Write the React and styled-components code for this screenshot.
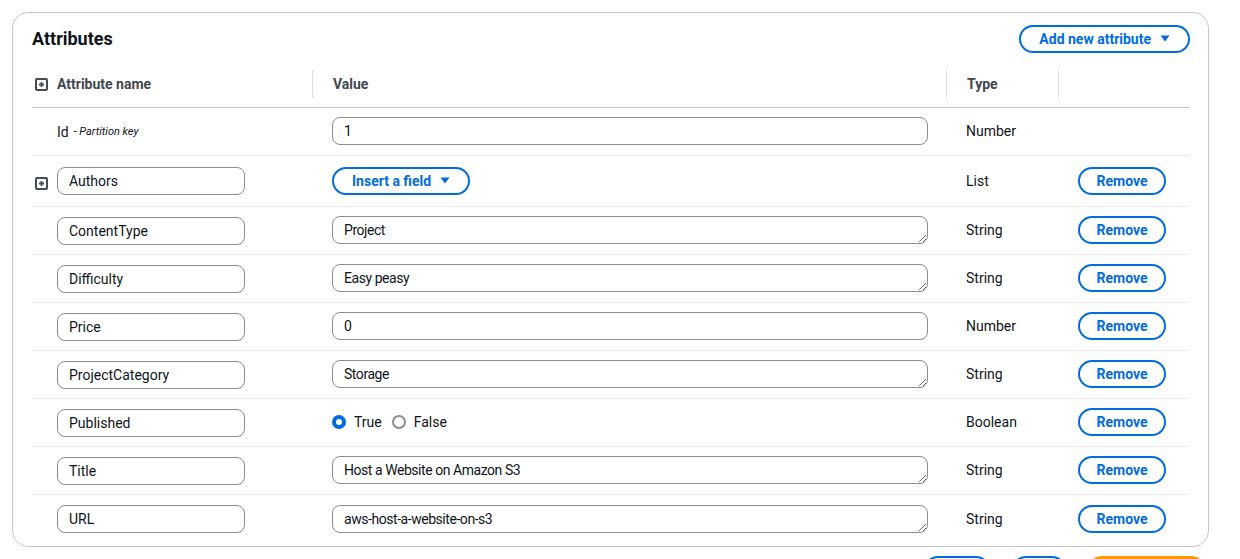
import React from "react";
import styled, { createGlobalStyle } from "styled-components";

const GlobalStyle = createGlobalStyle`
  body {
    margin: 0;
    background: #ffffff;
    font-family: Roboto, "Open Sans", Arial, sans-serif;
    font-size: 14px;
    line-height: 20px;
    color: #0f141a;
  }
  * { box-sizing: border-box; }
`;

const rows = [
  { name: "Authors", kind: "insert", type: "List", expandable: true },
  { name: "ContentType", kind: "text", value: "Project", type: "String" },
  { name: "Difficulty", kind: "text", value: "Easy peasy", type: "String" },
  { name: "Price", kind: "input", value: "0", type: "Number" },
  { name: "ProjectCategory", kind: "text", value: "Storage", type: "String" },
  { name: "Published", kind: "bool", value: true, type: "Boolean" },
  { name: "Title", kind: "text", value: "Host a Website on Amazon S3", type: "String" },
  { name: "URL", kind: "text", value: "aws-host-a-website-on-s3", type: "String" },
];

const Caret = () => (
  <svg width="10" height="7" viewBox="0 0 10 7">
    <path d="M0.5 0.5 H9.5 L5 6.5 Z" fill="currentColor" />
  </svg>
);

const ExpandIcon = () => (
  <svg width="13" height="13" viewBox="0 0 13 13">
    <rect x="1" y="1" width="11" height="11" rx="1" fill="none" stroke="#414d5c" strokeWidth="2" />
    <path d="M6.5 4 V9 M4 6.5 H9" stroke="#414d5c" strokeWidth="1.8" />
  </svg>
);

const App = () => {
  return (
    <>
      <GlobalStyle />
      <Page>
        <Card>
          <CardHeader>
            <Title>Attributes</Title>
            <PillButton>
              Add new attribute <Caret />
            </PillButton>
          </CardHeader>

          <HeadRow>
            <NameCell>
              <IconSlot><ExpandIcon /></IconSlot>
              <HeadText>Attribute name</HeadText>
            </NameCell>
            <HeadCell $sep>
              <HeadText>Value</HeadText>
            </HeadCell>
            <HeadCell $sep>
              <HeadText>Type</HeadText>
            </HeadCell>
            <HeadCell $sep />
          </HeadRow>

          <Row>
            <NameCell>
              <IconSlot />
              <span>Id</span>
              <KeyNote>- Partition key</KeyNote>
            </NameCell>
            <Cell>
              <ValueInput defaultValue="1" readOnly />
            </Cell>
            <Cell>Number</Cell>
            <Cell />
          </Row>

          {rows.map((r, i) => (
            <Row key={r.name} $tall={r.kind === "insert"} $last={i === rows.length - 1}>
              <NameCell>
                <IconSlot $low>{r.expandable && <ExpandIcon />}</IconSlot>
                <NameInput defaultValue={r.name} readOnly />
              </NameCell>
              <Cell>
                {r.kind === "insert" && (
                  <PillButton>
                    Insert a field <Caret />
                  </PillButton>
                )}
                {r.kind === "input" && <ValueInput defaultValue={r.value} readOnly />}
                {r.kind === "text" && <ValueArea defaultValue={r.value} readOnly rows={1} />}
                {r.kind === "bool" && (
                  <Radios>
                    <RadioLabel>
                      <Radio $checked /> True
                    </RadioLabel>
                    <RadioLabel>
                      <Radio /> False
                    </RadioLabel>
                  </Radios>
                )}
              </Cell>
              <Cell>{r.type}</Cell>
              <Cell>
                <PillButton $w={88}>Remove</PillButton>
              </Cell>
            </Row>
          ))}
        </Card>

        <Footer>
          <PillButton $w={66}>Cancel</PillButton>
          <PillButton $w={54}>Save</PillButton>
          <PrimaryButton $w={117}>Save and close</PrimaryButton>
        </Footer>
      </Page>
    </>
  );
};

const Page = styled.div`
  padding: 12px 31px 0 12px;
`;

const Card = styled.div`
  width: 1197px;
  border: 1px solid #c6c6cd;
  border-radius: 16px;
  padding: 12px 18px 3px 19px;
`;

const CardHeader = styled.div`
  display: flex;
  align-items: center;
  justify-content: space-between;
  height: 27px;
`;

const Title = styled.h2`
  margin: 0;
  font-size: 18px;
  line-height: 22px;
  font-weight: 700;
  color: #0f141a;
`;

const PillButton = styled.button`
  display: inline-flex;
  align-items: center;
  justify-content: center;
  gap: 9px;
  height: 28px;
  width: ${(p) => (p.$w ? `${p.$w}px` : "auto")};
  padding: 0 ${(p) => (p.$w ? "0" : "18px")};
  border: 2px solid #006ce0;
  border-radius: 20px;
  background: #ffffff;
  color: #006ce0;
  font-family: inherit;
  font-size: 14px;
  font-weight: 700;
  line-height: 20px;
  white-space: nowrap;
  overflow: hidden;
  cursor: pointer;
`;

const PrimaryButton = styled(PillButton)`
  background: #ff9900;
  border-color: #ff9900;
  color: #0f141a;
`;

const grid = `
  display: grid;
  grid-template-columns: 280px 634px 112px 132px;
`;

const HeadRow = styled.div`
  ${grid}
  margin-top: 9px;
  height: 47px;
  border-bottom: 1px solid #c6c6cd;
  align-items: center;
`;

const HeadCell = styled.div`
  height: 28px;
  display: flex;
  align-items: center;
  padding-left: 20px;
  border-left: ${(p) => (p.$sep ? "1px solid #dedee3" : "none")};
`;

const HeadText = styled.span`
  font-weight: 700;
  color: #424650;
`;

const Row = styled.div`
  ${grid}
  height: ${(p) => (p.$tall ? "51px" : "48px")};
  align-items: center;
  border-bottom: ${(p) => (p.$last ? "none" : "1px solid #ebebf0")};
`;

const NameCell = styled.div`
  display: flex;
  align-items: center;
`;

const IconSlot = styled.div`
  width: 25px;
  flex: none;
  padding-left: 3px;
  display: flex;
  align-items: center;
  margin-top: ${(p) => (p.$low ? "5px" : "0")};
`;

const KeyNote = styled.span`
  font-size: 11px;
  font-style: italic;
  margin-left: 5px;
  color: #0f141a;
`;

const Cell = styled.div`
  display: flex;
  align-items: center;
  padding-left: 20px;
  padding-bottom: 1px;
`;

const fieldStyle = `
  height: 28px;
  border: 1px solid #8c8c94;
  border-radius: 8px;
  padding: 3px 11px;
  font-family: inherit;
  font-size: 14px;
  line-height: 20px;
  color: #0f141a;
  background: #ffffff;
  outline: none;
`;

const NameInput = styled.input`
  ${fieldStyle}
  width: 188px;
`;

const ValueInput = styled.input`
  ${fieldStyle}
  width: 596px;
`;

const ValueArea = styled.textarea`
  ${fieldStyle}
  width: 596px;
  padding-top: 3px;
  padding-bottom: 2px;
  letter-spacing: -0.45px;
  resize: vertical;
  overflow: hidden;
  display: block;
`;

const Radios = styled.div`
  display: flex;
  align-items: center;
  gap: 10px;
`;

const RadioLabel = styled.label`
  display: flex;
  align-items: center;
  gap: 8px;
`;

const Radio = styled.span`
  width: 14px;
  height: 14px;
  border-radius: 50%;
  background: #ffffff;
  border: ${(p) => (p.$checked ? "4px solid #006ce0" : "2px solid #8c8c94")};
`;

const Footer = styled.div`
  display: flex;
  justify-content: flex-end;
  gap: 22px;
  width: 1193px;
  margin-top: 9px;
`;

export default App;
